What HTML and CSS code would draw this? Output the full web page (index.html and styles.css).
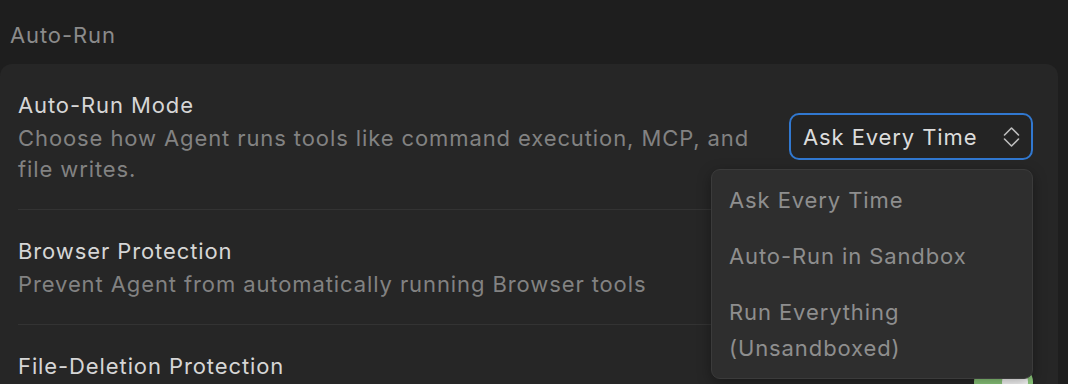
FILE: index.html
```html
<!DOCTYPE html>
<html lang="en">

<head>
    <meta charset="UTF-8">
    <meta name="viewport" content="width=device-width, initial-scale=1.0">
    <title>Auto-Run Settings</title>
    <link rel="stylesheet" href="styles.css">
</head>

<body>
    <div class="section-title">Auto-Run</div>

    <div class="card">
        <div class="row">
            <div class="row-text">
                <div class="row-title">Auto-Run Mode</div>
                <div class="row-desc">Choose how Agent runs tools like command execution, MCP, and file writes.</div>
            </div>
            <div class="select-wrap">
                <button class="select">
                    <span>Ask Every Time</span>
                    <svg class="chevrons" width="17" height="22" viewBox="0 0 17 22">
                        <path d="M1.5 9 L8.5 2 L15.5 9" />
                        <path d="M1.5 13 L8.5 20 L15.5 13" />
                    </svg>
                </button>
                <ul class="menu">
                    <li>Ask Every Time</li>
                    <li>Auto-Run in Sandbox</li>
                    <li>Run Everything (Unsandboxed)</li>
                </ul>
            </div>
        </div>

        <div class="row">
            <div class="row-text">
                <div class="row-title">Browser Protection</div>
                <div class="row-desc">Prevent Agent from automatically running Browser tools</div>
            </div>
            <div class="toggle on"><span class="knob"></span></div>
        </div>

        <div class="row">
            <div class="row-text">
                <div class="row-title">File-Deletion Protection</div>
                <div class="row-desc">Prevent Agent from deleting files automatically</div>
            </div>
            <div class="toggle on"><span class="knob"></span></div>
        </div>
    </div>
</body>

</html>
```

FILE: styles.css
```css
body {
    height: 384px;
    margin: 0;
    overflow: hidden;
    background-color: #1e1e1e;
    font-family: "Inter", "Noto Sans", sans-serif;
    font-size: 22px;
    letter-spacing: 0.9px;
    -webkit-font-smoothing: antialiased;
}

.section-title {
    padding: 20px 10px 14px;
    line-height: 30px;
    color: #8b8b8b;
}

/* -- Settings card -- */

.card {
    background-color: #262626;
    border-radius: 12px;
    margin-right: 10px;
    padding: 0 25px 0 18px;
}

.row {
    display: flex;
    align-items: center;
    gap: 20px;
    padding: 24px 0 24px;
    border-bottom: 1px solid #333333;
}

.row:last-child {
    border-bottom: none;
}

.row-text {
    flex: 1;
    min-width: 0;
}

.row-title {
    line-height: 35px;
    color: #d6d6d6;
}

.row-desc {
    line-height: 31px;
    color: #828282;
}

/* -- Select + open menu -- */

.select-wrap {
    position: relative;
}

.select {
    display: flex;
    align-items: center;
    justify-content: space-between;
    box-sizing: border-box;
    width: 244px;
    height: 47px;
    padding: 0 11px 0 12px;
    background-color: #242424;
    border: 2px solid #3178d0;
    border-radius: 10px;
    font-family: inherit;
    font-size: 22px;
    letter-spacing: 0.9px;
    color: #dcdcdc;
}

.chevrons path {
    fill: none;
    stroke: #bdbdbd;
    stroke-width: 1.6;
    stroke-linecap: round;
    stroke-linejoin: round;
}

.menu {
    position: absolute;
    top: 56px;
    right: 0;
    z-index: 10;
    box-sizing: border-box;
    width: 322px;
    margin: 0;
    padding: 2px 0;
    list-style: none;
    background-color: #2e2e2e;
    border: 1px solid #3b3b3b;
    border-radius: 9px;
    box-shadow: 0 4px 14px rgba(0, 0, 0, 0.35);
}

.menu>li {
    padding: 10px 40px 10px 17px;
    line-height: 36px;
    color: #8e8e8e;
}

/* -- Toggle -- */

.toggle {
    position: relative;
    flex: none;
    width: 59px;
    height: 32px;
    border-radius: 16px;
    background-color: #444;
}

.toggle.on {
    background-color: #8fcd7e;
}

.toggle>.knob {
    position: absolute;
    top: 3px;
    left: 3px;
    width: 26px;
    height: 26px;
    border-radius: 13px;
    background-color: #ffffff;
}

.toggle.on>.knob {
    left: 28px;
}
```
